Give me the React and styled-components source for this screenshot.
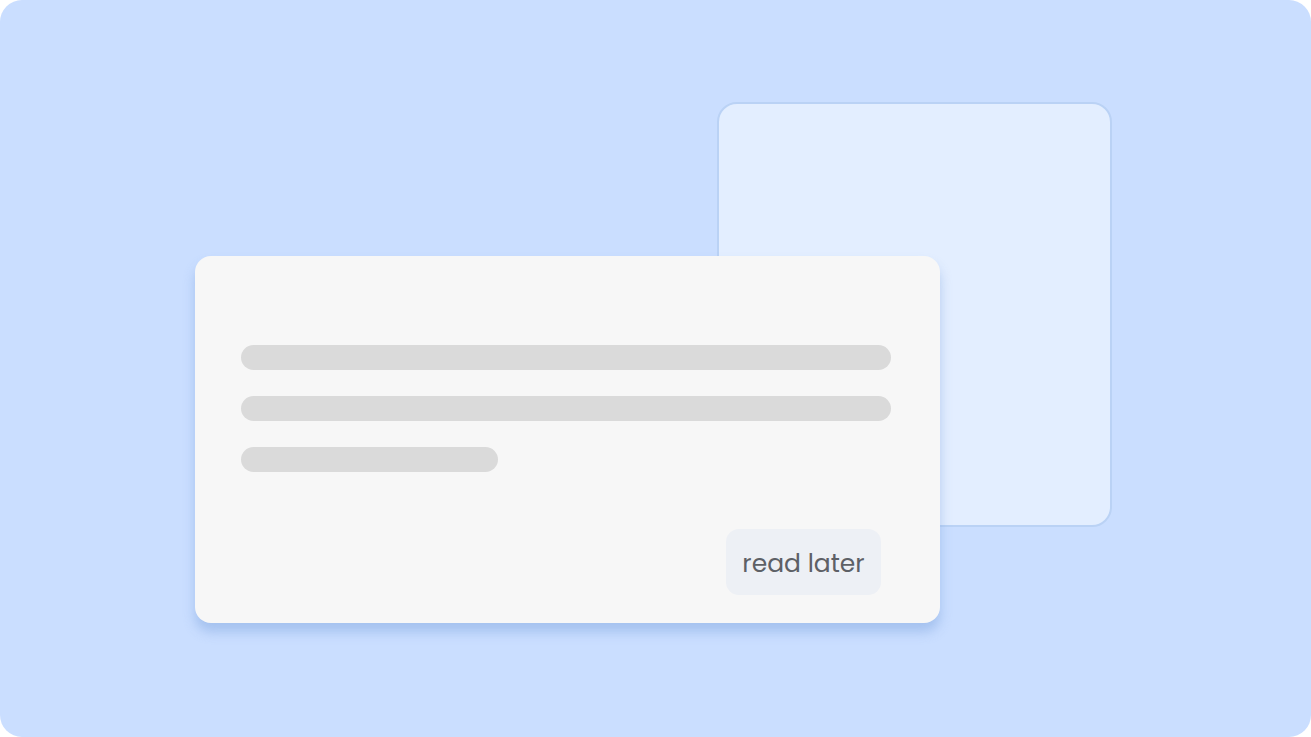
import styled, { createGlobalStyle } from "styled-components";

const Global = createGlobalStyle`
  html, body {
    margin: 0;
    padding: 0;
    background: #ffffff;
  }
  * { box-sizing: border-box; }
`;

const Backdrop = styled.div`
  width: 1311px;
  height: 737px;
  background: #cadeff;
  border-radius: 22px;
  padding: 102px 0 0 195px;
`;

const Stage = styled.div`
  display: grid;
  width: 917px;
  height: 521px;
`;

const BackCard = styled.div`
  grid-area: 1 / 1;
  justify-self: end;
  align-self: start;
  width: 395px;
  height: 425px;
  background: #e3eeff;
  border: 2px solid #bad2f5;
  border-radius: 20px;
`;

const FrontCard = styled.div`
  grid-area: 1 / 1;
  justify-self: start;
  align-self: end;
  width: 745px;
  height: 367px;
  background: #f7f7f7;
  border-radius: 16px;
  box-shadow: 0 9px 12px rgba(120, 160, 220, 0.45);
  padding: 89px 59px 28px 46px;
  display: flex;
  flex-direction: column;
`;

const Lines = styled.div`
  display: flex;
  flex-direction: column;
  gap: 26px;
`;

const Line = styled.div`
  width: ${(p) => p.$w}px;
  height: 25px;
  border-radius: 13px;
  background: #dadada;
`;

const Footer = styled.div`
  margin-top: auto;
  display: flex;
  justify-content: flex-end;
`;

const Button = styled.button`
  width: 155px;
  height: 66px;
  border: none;
  border-radius: 13px;
  background: #edf0f5;
  color: #5d6066;
  font-family: "Poppins", "Noto Sans", "Open Sans", sans-serif;
  font-size: 25px;
  padding: 3px 0 0;
  cursor: pointer;
`;

export default function App() {
  return (
    <>
      <Global />
      <Backdrop>
        <Stage>
          <BackCard />
          <FrontCard>
            <Lines>
              <Line $w={650} />
              <Line $w={650} />
              <Line $w={257} />
            </Lines>
            <Footer>
              <Button>read later</Button>
            </Footer>
          </FrontCard>
        </Stage>
      </Backdrop>
    </>
  );
}
